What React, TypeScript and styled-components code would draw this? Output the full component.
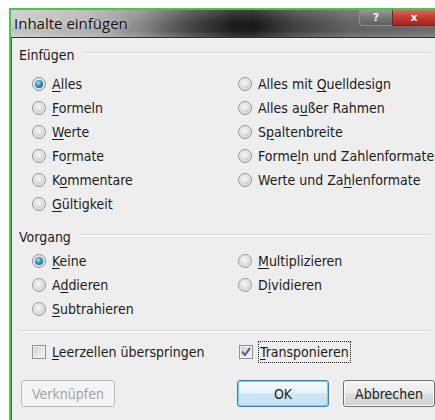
import React from 'react';
import styled, { createGlobalStyle, css } from 'styled-components';

const Global = createGlobalStyle`
  html, body { margin: 0; padding: 0; background: #ffffff; }
  body {
    width: 435px;
    height: 420px;
    overflow: hidden;
    font-family: "DejaVu Sans Condensed", "DejaVu Sans", sans-serif;
    font-size: 14px;
    color: #1b1b1b;
  }
`;

const Frame = styled.div`
  margin: 8px 0 0 9px;
  height: 412px;
  border-top: 2px solid #4cc256;
  border-left: 2px solid #4cc256;
  display: flex;
  flex-direction: column;
`;

const TitleBar = styled.div`
  height: 27px;
  flex: none;
  display: flex;
  align-items: flex-start;
  justify-content: space-between;
  background:
    linear-gradient(180deg, rgba(255,255,255,0.16) 0%, rgba(255,255,255,0) 45%, rgba(0,0,0,0.06) 75%, rgba(255,255,255,0.12) 100%),
    linear-gradient(90deg, #cbcbcb 0%, #b6b6b6 18%, #8e8e8e 30%, #4a4a4a 42%, #1f1f1f 52%, #1a1a1a 57%, #444444 67%, #666666 80%, #737373 100%);
`;

const Title = styled.span`
  font-family: "Open Sans", "Noto Sans", sans-serif;
  font-size: 15px;
  line-height: 27px;
  padding-left: 3px;
  color: #151515;
  text-shadow: 0 0 6px rgba(255,255,255,0.7);
`;

const Caption = styled.div`
  display: flex;
  height: 15px;
`;

const CaptionButton = styled.div<{ $close?: boolean }>`
  height: 15px;
  display: flex;
  align-items: center;
  justify-content: center;
  color: #f2f2f2;
  font-family: "DejaVu Sans", sans-serif;
  font-weight: bold;
  font-size: 11px;
  border: 1px solid #8e8e8e;
  border-top: none;
  ${p => p.$close
    ? css`
        width: 42px;
        background: linear-gradient(180deg, #d56a5f 0%, #c0392c 55%, #a3281d 100%);
        border-color: #6b2a22;
        border-right: none;
      `
    : css`
        width: 32px;
        border-bottom-left-radius: 4px;
        border-right: none;
        background: linear-gradient(180deg, #9a9a9a 0%, #747474 55%, #5f5f5f 100%);
      `}
`;

const Client = styled.div`
  flex: 1;
  background: #eeeeee;
  border-top: 1px solid #2f2f2f;
  border-left: 1px solid #5a5a5a;
  display: flex;
  flex-direction: column;
`;

const GroupHeader = styled.div<{ $top: number }>`
  display: flex;
  align-items: center;
  gap: 8px;
  margin-top: ${p => p.$top}px;
  padding-left: 7px;
  height: 16px;
  line-height: 16px;
`;

const GroupRule = styled.div`
  flex: 1;
  margin-top: -5px;
  margin-right: 4px;
  border-top: 1px solid #d6d6d6;
  border-bottom: 1px solid #fbfbfb;
`;

const OptionGrid = styled.div<{ $top: number }>`
  display: grid;
  grid-template-columns: 206px 1fr;
  margin-top: ${p => p.$top}px;
  padding-left: 20px;
`;

const Column = styled.div`
  display: flex;
  flex-direction: column;
`;

const OptionRow = styled.label`
  display: flex;
  align-items: center;
  gap: 6px;
  height: 24px;
  white-space: nowrap;
`;

const RadioDot = styled.span<{ $on?: boolean }>`
  width: 14px;
  height: 14px;
  flex: none;
  box-sizing: border-box;
  border-radius: 50%;
  border: 1px solid #969696;
  background: radial-gradient(circle at 45% 40%, #fafafa 0%, #e0e0e0 40%, #bcbcbc 100%);
  box-shadow: inset 0 0 0 1px rgba(255,255,255,0.5);
  display: flex;
  align-items: center;
  justify-content: center;
  ${p => p.$on && css`
    border-color: #8590a6;
    &::after {
      content: '';
      width: 8px;
      height: 8px;
      border-radius: 50%;
      background: radial-gradient(circle at 40% 35%, #9ce6f4 0%, #2e92bc 45%, #14506e 100%);
    }
  `}
`;

const U = styled.span`
  text-decoration: underline;
  text-underline-offset: 2px;
`;

const Separator = styled.div<{ $top: number }>`
  margin: ${p => p.$top}px 4px 0 6px;
  border-top: 1px solid #d6d6d6;
  border-bottom: 1px solid #fbfbfb;
`;

const CheckRow = styled.div`
  display: grid;
  grid-template-columns: 207px 1fr;
  margin-top: 8px;
  padding-left: 20px;
  height: 24px;
`;

const CheckItem = styled.label`
  display: flex;
  align-items: center;
  gap: 6px;
  white-space: nowrap;
`;

const Box = styled.span`
  width: 14px;
  height: 14px;
  flex: none;
  box-sizing: border-box;
  border: 1px solid #8f8f8f;
  background: linear-gradient(135deg, #cdcdcd 0%, #e9e9e9 60%, #f6f6f6 100%);
  box-shadow: inset 0 0 0 1px #f4f4f4;
  display: flex;
  align-items: center;
  justify-content: center;
`;

const Focus = styled.span`
  outline: 1px dotted #1a1a1a;
  outline-offset: 0;
  padding: 2px 1px;
`;

const ButtonRow = styled.div`
  display: flex;
  margin-top: 16px;
  padding-left: 9px;
`;

const Button = styled.div<{ $kind?: 'disabled' | 'default' | 'normal' }>`
  width: 92px;
  height: 27px;
  box-sizing: border-box;
  border-radius: 3px;
  display: flex;
  align-items: center;
  justify-content: center;
  font-size: 14px;
  ${p => p.$kind === 'disabled' && css`
    border: 1px solid #b9b9b9;
    background: #f4f4f4;
    color: #a2a2a2;
    margin-right: auto;
    width: 94px;
  `}
  ${p => p.$kind === 'default' && css`
    border: 1px solid #3c7fb1;
    box-shadow: inset 0 0 0 1px #6fd0f3;
    background: linear-gradient(180deg, #f6fbfe 0%, #e6f2fa 48%, #cfe6f5 52%, #c4e0f3 100%);
    margin-right: 14px;
  `}
  ${p => p.$kind === 'normal' && css`
    border: 1px solid #707070;
    box-shadow: inset 0 0 0 1px #fbfbfb;
    background: linear-gradient(180deg, #f4f4f4 0%, #ebebeb 48%, #dcdcdc 52%, #d2d2d2 100%);
  `}
`;

type Opt = { pre: string; key: string; post: string; on?: boolean };

const pasteLeft: Opt[] = [
  { pre: '', key: 'A', post: 'lles', on: true },
  { pre: '', key: 'F', post: 'ormeln' },
  { pre: '', key: 'W', post: 'erte' },
  { pre: 'Fo', key: 'r', post: 'mate' },
  { pre: 'K', key: 'o', post: 'mmentare' },
  { pre: '', key: 'G', post: 'ültigkeit' },
];

const pasteRight: Opt[] = [
  { pre: 'Alles mit ', key: 'Q', post: 'uelldesign' },
  { pre: 'Alles a', key: 'u', post: 'ßer Rahmen' },
  { pre: 'S', key: 'p', post: 'altenbreite' },
  { pre: 'Forme', key: 'l', post: 'n und Zahlenformate' },
  { pre: 'Werte und Za', key: 'h', post: 'lenformate' },
];

const opLeft: Opt[] = [
  { pre: '', key: 'K', post: 'eine', on: true },
  { pre: 'A', key: 'd', post: 'dieren' },
  { pre: '', key: 'S', post: 'ubtrahieren' },
];

const opRight: Opt[] = [
  { pre: '', key: 'M', post: 'ultiplizieren' },
  { pre: 'D', key: 'i', post: 'vidieren' },
];

const Options = ({ items }: { items: Opt[] }) => (
  <Column>
    {items.map(o => (
      <OptionRow key={o.pre + o.key + o.post}>
        <RadioDot $on={o.on} />
        <span>
          {o.pre}
          <U>{o.key}</U>
          {o.post}
        </span>
      </OptionRow>
    ))}
  </Column>
);

const Check = () => (
  <svg width="10" height="10" viewBox="0 0 10 10">
    <path d="M1.5 5.2 L4 8 L8.6 1.6" fill="none" stroke="#4b5f9c" strokeWidth="2" strokeLinecap="round" strokeLinejoin="round" />
  </svg>
);

export default function App() {
  return (
    <>
      <Global />
      <Frame>
        <TitleBar>
          <Title>Inhalte einfügen</Title>
          <Caption>
            <CaptionButton>?</CaptionButton>
            <CaptionButton $close>x</CaptionButton>
          </Caption>
        </TitleBar>
        <Client>
          <GroupHeader $top={9}>
            <span>Einfügen</span>
            <GroupRule />
          </GroupHeader>
          <OptionGrid $top={9}>
            <Options items={pasteLeft} />
            <Options items={pasteRight} />
          </OptionGrid>
          <GroupHeader $top={13}>
            <span>Vorgang</span>
            <GroupRule />
          </GroupHeader>
          <OptionGrid $top={4}>
            <Options items={opLeft} />
            <Options items={opRight} />
          </OptionGrid>
          <Separator $top={9} />
          <CheckRow>
            <CheckItem>
              <Box />
              <span>
                <U>L</U>eerzellen überspringen
              </span>
            </CheckItem>
            <CheckItem>
              <Box>
                <Check />
              </Box>
              <Focus>
                <U>T</U>ransponieren
              </Focus>
            </CheckItem>
          </CheckRow>
          <ButtonRow>
            <Button $kind="disabled">Verknüpfen</Button>
            <Button $kind="default">OK</Button>
            <Button $kind="normal">Abbrechen</Button>
          </ButtonRow>
        </Client>
      </Frame>
    </>
  );
}
